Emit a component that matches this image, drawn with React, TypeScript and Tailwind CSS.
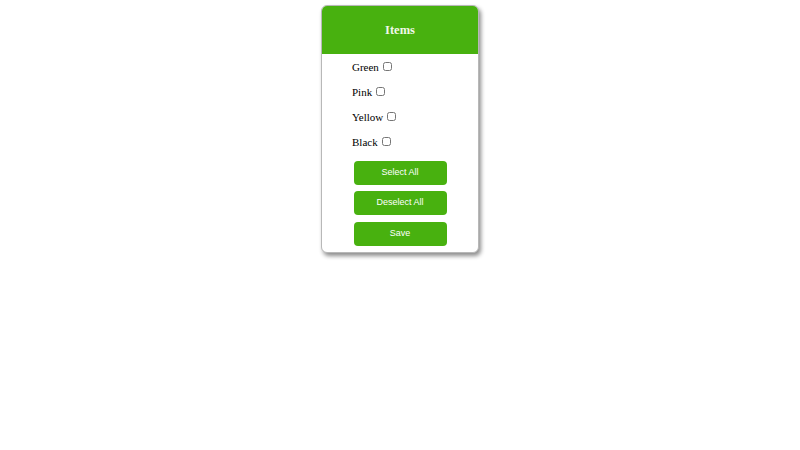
import React, { useState } from "react";

const items = ["Green", "Pink", "Yellow", "Black"];

export default function App() {
  const [checked, setChecked] = useState<Record<string, boolean>>({});

  const setAll = (value: boolean) =>
    setChecked(Object.fromEntries(items.map((i) => [i, value])));

  return (
    <div className="min-h-[450px] w-full bg-white pt-[5px]">
      <div className="mx-auto w-[158px] rounded-[6px] border border-[#b8b8b8] bg-white shadow-[2px_3px_4px_rgba(0,0,0,0.45)] overflow-hidden">
        {/* HEADER */}
        <div className="h-[48px] flex items-center justify-center bg-[#48b10f]">
          <h1 className="font-['Liberation_Serif',serif] font-bold text-[12.5px] text-[#f1f8ea]">
            Items
          </h1>
        </div>

        {/* LIST */}
        <div className="pl-[30px] pt-[1px]">
          {items.map((item) => (
            <label
              key={item}
              className="h-[25px] flex items-center font-['Liberation_Serif',serif] text-[11px] text-black"
            >
              {item}
              <input
                type="checkbox"
                className="ml-[4px] w-[9px] h-[9px] mb-[2px]"
                checked={!!checked[item]}
                onChange={(e) =>
                  setChecked({ ...checked, [item]: e.target.checked })
                }
              />
            </label>
          ))}
        </div>

        {/* ACTIONS */}
        <div className="flex flex-col items-center gap-[6.5px] pt-[5.5px] pb-[6px]">
          <button
            onClick={() => setAll(true)}
            className="w-[93px] h-[24px] rounded-[4px] bg-[#48b10f] text-white font-['Liberation_Sans',sans-serif] text-[9px]"
          >
            Select All
          </button>
          <button
            onClick={() => setAll(false)}
            className="w-[93px] h-[24px] rounded-[4px] bg-[#48b10f] text-white font-['Liberation_Sans',sans-serif] text-[9px]"
          >
            Deselect All
          </button>
          <button className="w-[93px] h-[24px] rounded-[4px] bg-[#48b10f] text-white font-['Liberation_Sans',sans-serif] text-[9px]">
            Save
          </button>
        </div>
      </div>
    </div>
  );
}
